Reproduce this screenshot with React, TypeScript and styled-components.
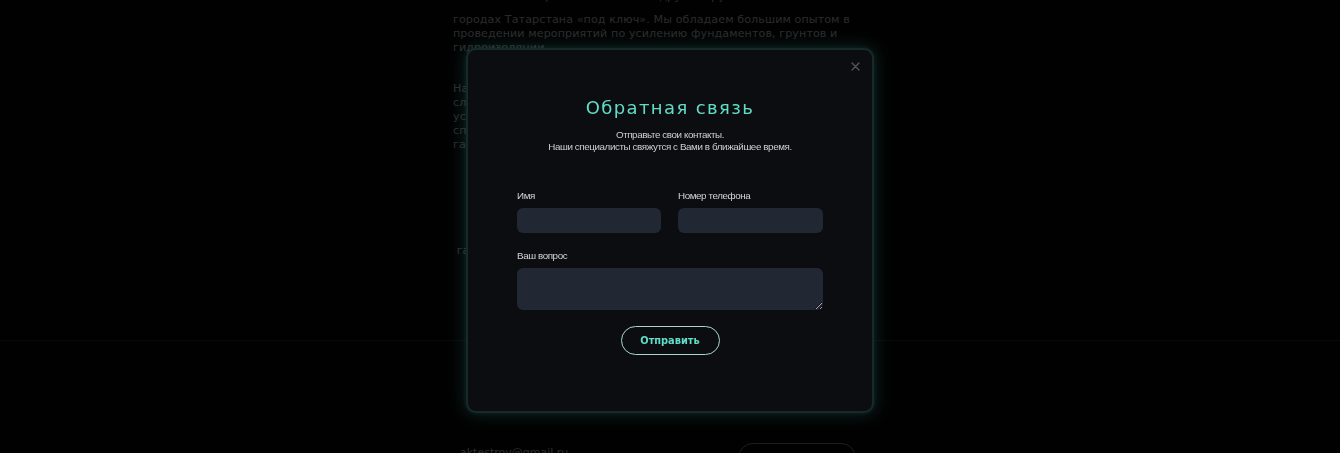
import React from "react";
import styled, { createGlobalStyle } from "styled-components";

const GlobalStyle = createGlobalStyle`
  html, body { margin: 0; padding: 0; background: #050506; overflow: hidden; }
  body { font-family: "Liberation Sans", Arial, sans-serif; }
  * { box-sizing: border-box; }
`;

const Page = styled.div`
  width: 1340px;
  height: 453px;
  overflow: hidden;
  background: #060607;
`;

const Column = styled.div`
  width: 434px;
  margin: 0 auto;
`;

const Paragraph = styled.p<{ $gap?: number }>`
  margin: ${(p) => p.$gap ?? 0}px 0 0;
  font-family: "DejaVu Sans", sans-serif;
  font-size: 11.1px;
  line-height: 14px;
  letter-spacing: 0.1px;
  color: #b0b0b5;
  white-space: nowrap;
`;

const Line = styled.span<{ $after?: number }>`
  display: block;
  margin-bottom: ${(p) => p.$after ?? 0}px;
`;

const Divider = styled.div`
  margin-top: 82px;
  height: 1px;
  background: #25262a;
`;

const Footer = styled.div`
  width: 434px;
  margin: 102px auto 0;
  padding: 0 31px 0 7px;
  display: flex;
  align-items: flex-start;
  justify-content: space-between;
`;

const Email = styled.span`
  margin-top: 3px;
  font-family: "DejaVu Sans", sans-serif;
  font-size: 11px;
  color: #b8b8bc;
`;

const GhostButton = styled.div`
  width: 118px;
  height: 30px;
  border: 1px solid #7a7a7e;
  border-radius: 16px;
`;

const Backdrop = styled.div`
  position: fixed;
  inset: 0;
  background: rgba(0, 0, 0, 0.76);
  display: flex;
  justify-content: center;
  align-items: flex-start;
  padding-top: 48px;
`;

const Modal = styled.div`
  position: relative;
  width: 408px;
  height: 365px;
  background: #0c0d11;
  border: 2px solid #182a27;
  border-radius: 10px;
  box-shadow: 0 0 16px 3px rgba(50, 150, 135, 0.2), 0 0 4px rgba(60, 170, 150, 0.15);
  display: flex;
  flex-direction: column;
  align-items: center;
  padding: 46px 49px 0;
`;

const Close = styled.button`
  position: absolute;
  top: 8px;
  right: 9px;
  width: 16px;
  height: 16px;
  padding: 0;
  border: 0;
  background: none;
  display: flex;
  align-items: center;
  justify-content: center;
  cursor: pointer;
`;

const Title = styled.h2`
  margin: 0;
  font-family: "DejaVu Sans", sans-serif;
  font-weight: 400;
  font-size: 18px;
  line-height: 24px;
  letter-spacing: 1.4px;
  color: #62dcc7;
`;

const Subtitle = styled.p`
  margin: 9px 0 0;
  font-family: "Liberation Sans", Arial, sans-serif;
  font-size: 9.8px;
  line-height: 12px;
  letter-spacing: -0.4px;
  color: #cfcfd2;
  text-align: center;
`;

const Form = styled.form`
  align-self: stretch;
  margin-top: 37px;
  display: flex;
  flex-direction: column;
  gap: 17px;
`;

const Row = styled.div`
  display: grid;
  grid-template-columns: 144px 145px;
  gap: 17px;
`;

const Field = styled.label`
  display: flex;
  flex-direction: column;
  gap: 6px;
`;

const LabelText = styled.span`
  font-family: "Liberation Sans", Arial, sans-serif;
  font-size: 9.8px;
  line-height: 12px;
  letter-spacing: -0.4px;
  color: #d4d4d6;
`;

const Input = styled.input`
  height: 25px;
  border: 0;
  border-radius: 6px;
  background: #222833;
  outline: none;
  padding: 0 8px;
  color: #ddd;
`;

const TextArea = styled.textarea`
  height: 42px;
  border: 0;
  border-radius: 6px;
  background: #222833;
  outline: none;
  padding: 6px 8px;
  color: #ddd;
  resize: vertical;
`;

const Submit = styled.button`
  margin-top: 16px;
  width: 99px;
  height: 29px;
  border: 1.5px solid #a9d6cf;
  border-radius: 15px;
  background: transparent;
  font-family: "DejaVu Sans", sans-serif;
  font-weight: 700;
  font-size: 9.8px;
  color: #62dcc7;
  cursor: pointer;
`;

export default function App() {
  return (
    <>
      <GlobalStyle />
      <Page>
        <Column>
          <Paragraph $gap={-10}>
            <Line $after={9}>Мы выполняем работы в Казани и других крупных</Line>
            <Line>городах Татарстана «под ключ». Мы обладаем большим опытом в</Line>
            <Line>проведении мероприятий по усилению фундаментов, грунтов и</Line>
            <Line>гидроизоляции.</Line>
          </Paragraph>
          <Paragraph $gap={27}>
            <Line>Наша команда состоит из опытных инженеров и строителей,</Line>
            <Line>следящих за качеством работ на каждом этапе, что позволяет нам о</Line>
            <Line>успешно решать задачи любой сложности в короткие сроки.</Line>
            <Line>специалисты компании предоставляют</Line>
            <Line>гарантию на все виды работ.</Line>
          </Paragraph>
          <Paragraph $gap={92}>
            <Line>&nbsp;га</Line>
          </Paragraph>
        </Column>
        <Divider />
        <Footer>
          <Email>aktestroy@gmail.ru</Email>
          <GhostButton />
        </Footer>
        <Backdrop>
          <Modal>
            <Close aria-label="Закрыть">
              <svg width="9" height="9" viewBox="0 0 9 9">
                <path d="M1 1L8 8M8 1L1 8" stroke="#55565b" strokeWidth="1.3" strokeLinecap="round" />
              </svg>
            </Close>
            <Title>Обратная связь</Title>
            <Subtitle>
              Отправьте свои контакты.
              <br />
              Наши специалисты свяжутся с Вами в ближайшее время.
            </Subtitle>
            <Form onSubmit={(e) => e.preventDefault()}>
              <Row>
                <Field>
                  <LabelText>Имя</LabelText>
                  <Input type="text" />
                </Field>
                <Field>
                  <LabelText>Номер телефона</LabelText>
                  <Input type="tel" />
                </Field>
              </Row>
              <Field>
                <LabelText>Ваш вопрос</LabelText>
                <TextArea />
              </Field>
            </Form>
            <Submit type="button">Отправить</Submit>
          </Modal>
        </Backdrop>
      </Page>
    </>
  );
}
